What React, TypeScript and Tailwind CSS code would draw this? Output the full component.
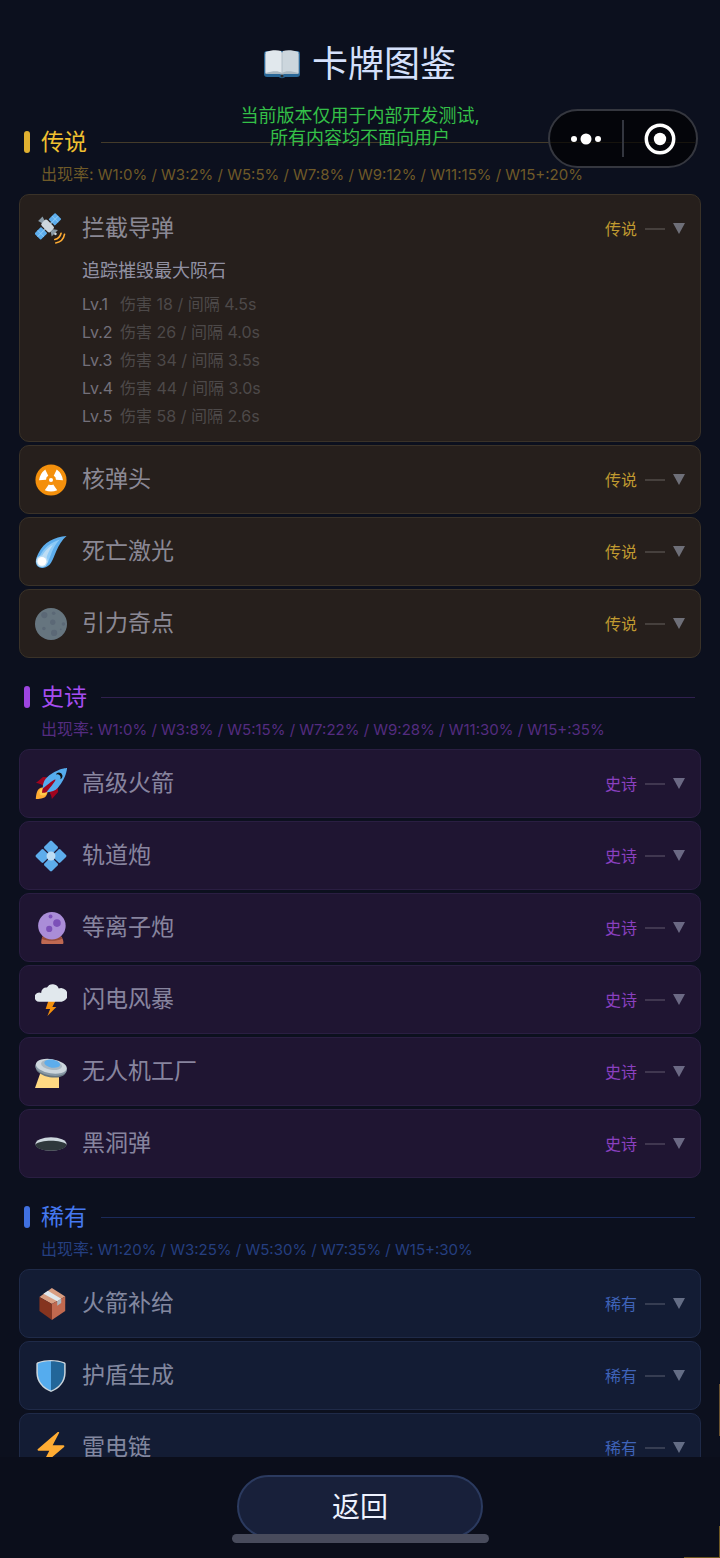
import { useState } from "react"
import type { ReactNode } from "react"
import clsx from "clsx"

type Tier = "legend" | "epic" | "rare"

type CardData = {
  name: string
  icon: ReactNode
  desc?: string
  levels?: string[]
}

const Icon = ({ children, className = "size-8" }: { children: ReactNode; className?: string }) => (
  <svg viewBox="0 0 36 36" className={clsx("shrink-0", className)} aria-hidden="true">
    {children}
  </svg>
)

const Book = () => (
  <Icon className="size-9">
    <path fill="#2a6797" d="M3 5h30a3 3 0 0 1 3 3v20a3 3 0 0 1-3 3H21c-1 1.500-5 1.500-6 0H3a3 3 0 0 1-3-3V8a3 3 0 0 1 3-3z" />
    <path fill="#aab8c2" d="M1.500 8h33v20H20l-2 1-2-1H1.500z" />
    <path fill="#e1e8ed" d="M1.500 6C7 4 13 3.500 17 5l1 2v20c-4-2.500-9-2-16.500 0z" />
    <path fill="#ccd6dd" d="M34.500 6C29 4 23 3.500 19 5l-1 2v20c4-2.500 9-2 16.500 0z" />
    <path fill="#aab8c2" d="M17.600 6.500h.8V27h-.8z" />
    <circle cx="18" cy="30" r="1.500" fill="#292f33" />
  </Icon>
)

const Satellite = () => (
  <Icon>
    <g transform="translate(14.500 15) rotate(-45)">
      <path fill="#8899a6" d="M-9-1H9v2H-9z" />
      <rect x="6" y="-5" width="10.500" height="10" rx="1" fill="#5dadec" />
      <rect x="-16.500" y="-5" width="10.500" height="10" rx="1" fill="#5dadec" />
      <path fill="#8ccaf7" d="M11-5h.8V5H11zM-11.800-5h.8V5h-.8zM6-.5h10.500v1H6zM-16.500-.5H-6v1h-10.500z" />
      <path fill="#8899a6" d="M-3.500-12h7L2-7h-4z" />
      <rect x="-4.500" y="-7.500" width="9" height="14" rx="2.500" fill="#ccd6dd" />
      <path fill="#8899a6" d="M-2 6.500h4l3 4.500H-5z" />
      <circle cx="0" cy="12" r="1.500" fill="#ccd6dd" />
      <g fill="none" stroke="#ffac33" strokeWidth="1.800" strokeLinecap="round">
        <path d="M-5 16q5 3 10 0M-7 19.500q7 5 14 0" />
      </g>
    </g>
  </Icon>
)

const blade = "M15.500 23q2.500 1.500 5 0l4.500 6.500q-7 3-14 0z"

const Nuke = () => (
  <Icon>
    <circle cx="18" cy="18" r="17.500" fill="#f4900c" />
    <g fill="#fff">
      <path d={blade} />
      <path d={blade} transform="rotate(120 18 18)" />
      <path d={blade} transform="rotate(240 18 18)" />
      <circle cx="18" cy="18" r="2.300" />
    </g>
  </Icon>
)

const Comet = () => (
  <Icon>
    <path fill="#5dadec" d="M35.500 0C22 1 10 7 4 19c-2 4-3.500 8-3 11 .6 4 4 6.300 8 6 9-.7 11-10 15-19 3-7 6-12 11.500-17z" />
    <path fill="#8ccaf7" d="M28 4C18 7 9 14 5 24l9 7c4-8 5-18 14-27z" />
    <path fill="#bdddf4" d="M20 10c-6 3-11 9-13 15l5 3c1-6 4-12 8-18z" />
    <circle cx="7.800" cy="28.500" r="6.500" fill="#bdddf4" />
    <circle cx="7.800" cy="28.500" r="5" fill="#fff" />
  </Icon>
)

const Moon = () => (
  <Icon>
    <circle cx="18" cy="18" r="18" fill="#66757f" />
    <g fill="#5b6876">
      <circle cx="10.500" cy="8" r="3.500" />
      <circle cx="20" cy="16" r="3" />
      <circle cx="21.500" cy="28" r="3.500" />
      <circle cx="10" cy="23" r="2" />
      <circle cx="21" cy="6" r="2" />
      <circle cx="32" cy="18" r="2" />
      <circle cx="29" cy="24" r="1" />
    </g>
  </Icon>
)

const Rocket = () => (
  <Icon>
    <path fill="#a0041e" d="M1 17l8-7 16 1 1 16-7 8s0-6-6-12-12-6-12-6z" />
    <path fill="#ffac33" d="M1 35s0-8 3-11 11-2.800 11-2.800S15 29 12 32s-11 3-11 3z" />
    <circle cx="9" cy="27" r="4" fill="#ffcc4d" />
    <path fill="#55acee" d="M36 0S26 0 14 10c-6 5-6 14-4 16s11 2 16-4C36 10 36 0 36 0z" />
    <path fill="#111" d="M27 5a4 4 0 0 0-3.600 2.400A4 4 0 0 1 28.600 12.600 4 4 0 0 0 27 5z" />
    <path fill="#a0041e" d="M8 28s0-4 1-5 13-11 14-10-9 13-10 14-5 1-5 1z" />
  </Icon>
)

const Diamond = () => (
  <Icon>
    <g fill="#5dadec">
      <rect x="-6" y="-6" width="12" height="12" rx="1.500" transform="translate(18 8.500) rotate(45)" />
      <rect x="-6" y="-6" width="12" height="12" rx="1.500" transform="translate(18 27.500) rotate(45)" />
      <rect x="-6" y="-6" width="12" height="12" rx="1.500" transform="translate(8.500 18) rotate(45)" />
      <rect x="-6" y="-6" width="12" height="12" rx="1.500" transform="translate(27.500 18) rotate(45)" />
    </g>
    <circle cx="18" cy="18" r="5" fill="#bdddf4" />
  </Icon>
)

const CrystalBall = () => (
  <Icon>
    <path fill="#bf6952" d="M9 27h20c2 2 3 5 3 7.500 0 1-.5 1.500-1.500 1.500h-22c-1 0-1.500-.5-1.500-1.500C7 32 7.500 29 9 27z" />
    <path fill="#974b3a" d="M9 27h20l1.500 3c-7 3-16 3-23 0z" />
    <circle cx="19" cy="15.500" r="15.500" fill="#aa8dd8" />
    <circle cx="24.700" cy="12.500" r="4.300" fill="#7c50b8" />
    <circle cx="16" cy="19" r="3.500" fill="#7c50b8" />
    <circle cx="17.500" cy="5" r="2.200" fill="#7c50b8" />
  </Icon>
)

const Storm = () => (
  <Icon>
    <path fill="#f4900c" d="M15 19h8l-3.500 7h4.500L14 36l3-8h-5z" />
    <path fill="#e1e8ed" d="M29.500 4.500c-1 0-2 .2-2.800.6A7.200 7.200 0 0 0 13.500 4a5.500 5.500 0 0 0-6.500 5.500v.6A5.200 5.200 0 1 0 5 20h25a7.800 7.800 0 0 0-.5-15.500z" />
  </Icon>
)

const Saucer = () => (
  <Icon>
    <path fill="#ffd983" d="M6 19l21 5v12H0z" />
    <g transform="rotate(9 18 14)">
      <ellipse cx="18" cy="15.500" rx="17" ry="8.500" fill="#66757f" />
      <ellipse cx="18" cy="13.500" rx="18" ry="8.500" fill="#8899a6" />
      <ellipse cx="18" cy="11.500" rx="17.500" ry="8" fill="#ccd6dd" />
      <ellipse cx="18" cy="10" rx="12" ry="5.500" fill="#aab8c2" />
      <ellipse cx="18.500" cy="8.500" rx="9" ry="4.500" fill="#5dadec" />
    </g>
  </Icon>
)

const Hole = () => (
  <Icon>
    <ellipse cx="18" cy="18" rx="17.500" ry="7.500" fill="#ccd6dd" />
    <path fill="#2f383c" d="M.5 18.500C6 13 30 13 35.500 18.500 35 23 28 25.500 18 25.500S1 23 .5 18.500z" />
  </Icon>
)

const Box = () => (
  <Icon>
    <path fill="#d99e82" d="M19 0l15 9.500L19 18 5 10z" />
    <path fill="#85341f" d="M5 10l14 8v18L5 26z" />
    <path fill="#c1694f" d="M34 9.500V26L19 36V18z" />
    <path fill="#e1e8ed" d="M14.500 3l15 9L25 15 9.500 6.500z" />
    <path fill="#aab8c2" d="M29.500 12v5L25 20v-5z" />
  </Icon>
)

const Shield = () => (
  <Icon>
    <path fill="#ccd6dd" d="M18 0c5 0 10 .8 15 2.500 1 .4 1.500 1 1.500 2V14c0 11-7 18-16.500 22C8.500 32 1.500 25 1.500 14V4.500c0-1 .5-1.600 1.500-2C8 .8 13 0 18 0z" />
    <path fill="#55acee" d="M18 1.500c-5 0-9.500.7-14 2.200-.5.200-.8.600-.8 1.100V14c0 10 6 16.500 14.800 20.300z" />
    <path fill="#226699" d="M18 1.500c5 0 9.500.7 14 2.200.5.200.8.600.8 1.100V14c0 10-6 16.500-14.800 20.300z" />
  </Icon>
)

const Bolt = () => (
  <Icon>
    <path
      fill="#ffac33"
      d="M32.900 15.600A1 1 0 0 0 32 15H19.900l7-13.500A1 1 0 0 0 25.300.2L18 6.600 3.300 19.200A1 1 0 0 0 4 21h12.100l-7 13.500a1 1 0 0 0 1.600 1.300l7.300-6.400 14.700-12.600a1 1 0 0 0 .2-1.200z"
    />
  </Icon>
)

const tierStyles: Record<Tier, { bar: string; title: string; line: string; rate: string; card: string; badge: string }> = {
  legend: {
    bar: "bg-[#e0b030]",
    title: "text-[#f0c030]",
    line: "bg-[#443b2a]",
    rate: "text-[#6f5a28]",
    card: "bg-[#261f1c] border-[#3a3228]",
    badge: "text-[#c09a30]",
  },
  epic: {
    bar: "bg-[#9d45e0]",
    title: "text-[#a64df0]",
    line: "bg-[#30204f]",
    rate: "text-[#542c80]",
    card: "bg-[#1f1532] border-[#2a1e42]",
    badge: "text-[#8a40c0]",
  },
  rare: {
    bar: "bg-[#4070e0]",
    title: "text-[#4578f0]",
    line: "bg-[#1b2a5a]",
    rate: "text-[#253f80]",
    card: "bg-[#131c34] border-[#1f2a48]",
    badge: "text-[#3f63b8]",
  },
}

const sections: { tier: Tier; label: string; rate: string; cards: CardData[] }[] = [
  {
    tier: "legend",
    label: "传说",
    rate: "W1:0% / W3:2% / W5:5% / W7:8% / W9:12% / W11:15% / W15+:20%",
    cards: [
      {
        name: "拦截导弹",
        icon: <Satellite />,
        desc: "追踪摧毁最大陨石",
        levels: [
          "伤害 18 / 间隔 4.5s",
          "伤害 26 / 间隔 4.0s",
          "伤害 34 / 间隔 3.5s",
          "伤害 44 / 间隔 3.0s",
          "伤害 58 / 间隔 2.6s",
        ],
      },
      { name: "核弹头", icon: <Nuke /> },
      { name: "死亡激光", icon: <Comet /> },
      { name: "引力奇点", icon: <Moon /> },
    ],
  },
  {
    tier: "epic",
    label: "史诗",
    rate: "W1:0% / W3:8% / W5:15% / W7:22% / W9:28% / W11:30% / W15+:35%",
    cards: [
      { name: "高级火箭", icon: <Rocket /> },
      { name: "轨道炮", icon: <Diamond /> },
      { name: "等离子炮", icon: <CrystalBall /> },
      { name: "闪电风暴", icon: <Storm /> },
      { name: "无人机工厂", icon: <Saucer /> },
      { name: "黑洞弹", icon: <Hole /> },
    ],
  },
  {
    tier: "rare",
    label: "稀有",
    rate: "W1:20% / W3:25% / W5:30% / W7:35% / W15+:30%",
    cards: [
      { name: "火箭补给", icon: <Box /> },
      { name: "护盾生成", icon: <Shield /> },
      { name: "雷电链", icon: <Bolt /> },
    ],
  },
]

const Card = ({ card, tier, label }: { card: CardData; tier: Tier; label: string }) => {
  const [open, setOpen] = useState(Boolean(card.levels))
  const s = tierStyles[tier]

  return (
    <li className={clsx("rounded-[10px] border", s.card)}>
      <button
        type="button"
        onClick={() => setOpen(!open)}
        className="flex h-[67px] w-full items-center px-[15px] text-left"
      >
        {card.icon}
        <span className="ml-[15px] flex-1 text-[23px] text-[#e4e6ff]/55">{card.name}</span>
        <span className={clsx("text-base", s.badge)}>{label}</span>
        <span className="ml-2 h-[2px] w-5 bg-white/15" />
        <svg viewBox="0 0 12 11" className="ml-2 h-[11px] w-3 fill-[#c8d0e8]/45" aria-hidden="true">
          <path d="M0 0h12L6 11z" />
        </svg>
      </button>
      {open && card.levels && (
        <div className="-mt-[3px] pb-[11px] pl-[62px]">
          <p className="text-[18px] leading-6 text-[#d0d4f0]/65">{card.desc}</p>
          <ul className="mt-[7px]">
            {card.levels.map((text, i) => (
              <li key={text} className="flex gap-3 text-base leading-7">
                <span className="w-[26px] whitespace-nowrap text-[#73707a]">Lv.{i + 1}</span>
                <span className="text-[#4d4949]">{text}</span>
              </li>
            ))}
          </ul>
        </div>
      )}
    </li>
  )
}

export default function App() {
  return (
    <div className="relative flex h-screen flex-col overflow-hidden bg-[#0c101e] font-['Inter','Noto_Sans_CJK_SC',sans-serif]">
      <header className="flex h-[124px] shrink-0 items-start justify-center pt-10">
        <div className="flex h-12 items-center gap-3">
          <Book />
          <h1 className="text-4xl text-[#d5e0fb]">卡牌图鉴</h1>
        </div>
      </header>

      <main className="min-h-0 flex-1 overflow-hidden px-[19px]">
        {sections.map((section) => {
          const s = tierStyles[section.tier]
          return (
            <section key={section.tier} className="mb-[21px]">
              <div className="flex h-9 items-center pr-[6px] pl-[5px]">
                <span className={clsx("h-[22px] w-[6px] rounded-[3px]", s.bar)} />
                <h2 className={clsx("ml-[11px] text-[23px]", s.title)}>{section.label}</h2>
                <span className={clsx("ml-[14px] h-px flex-1", s.line)} />
              </div>
              <p className={clsx("mt-1 mb-[9px] pl-[22px] text-[15px] leading-5", s.rate)}>
                <span className="text-base leading-5">出现率:</span> {section.rate}
              </p>
              <ul className="flex flex-col gap-[3px]">
                {section.cards.map((card) => (
                  <Card key={card.name} card={card} tier={section.tier} label={section.label} />
                ))}
              </ul>
            </section>
          )
        })}
      </main>

      <footer className="flex h-[101px] shrink-0 items-start justify-center bg-[#0b0e1b] pt-[18px]">
        <button
          type="button"
          className="h-[63px] w-[246px] rounded-full border-2 border-[#2b3a5f] bg-[#18203a] text-[28px] text-[#eef2ff]"
        >
          返回
        </button>
      </footer>

      {/* Test build notice */}
      <p className="pointer-events-none absolute inset-x-0 top-[105px] text-center text-[18px] leading-[22px] text-[#34c048]">
        当前版本仅用于内部开发测试,
        <br />
        所有内容均不面向用户
      </p>

      {/* Mini program capsule */}
      <div className="absolute top-[109px] right-[22px] flex h-[59px] w-[150px] items-center rounded-full border-2 border-[#35373f] bg-black/65">
        <button type="button" aria-label="更多" className="flex h-full flex-1 items-center justify-center">
          <svg viewBox="0 0 32 12" className="h-3 w-8 fill-white" aria-hidden="true">
            <circle cx="4" cy="6" r="3" />
            <circle cx="16" cy="6" r="5.500" />
            <circle cx="28" cy="6" r="3" />
          </svg>
        </button>
        <span className="h-[37px] w-[2px] bg-[#33363f]" />
        <button type="button" aria-label="关闭" className="flex h-full flex-1 items-center justify-center">
          <svg viewBox="0 0 32 32" className="size-8" aria-hidden="true">
            <circle cx="16" cy="16" r="13.700" fill="none" stroke="#fff" strokeWidth="3.500" />
            <circle cx="16" cy="16" r="6.200" fill="#fff" />
          </svg>
        </button>
      </div>

      {/* Scene edge peeking out behind the panel */}
      <span className="absolute right-0 bottom-[122px] h-[52px] w-px bg-[#6b5330]" />
      <span className="absolute right-0 bottom-0 h-8 w-9 border-r border-b border-[#6e5822]" />

      {/* Home indicator */}
      <div className="absolute inset-x-0 bottom-[15px] flex justify-center">
        <span className="h-[9px] w-[257px] rounded-full bg-[#484b5c]" />
      </div>
    </div>
  )
}
